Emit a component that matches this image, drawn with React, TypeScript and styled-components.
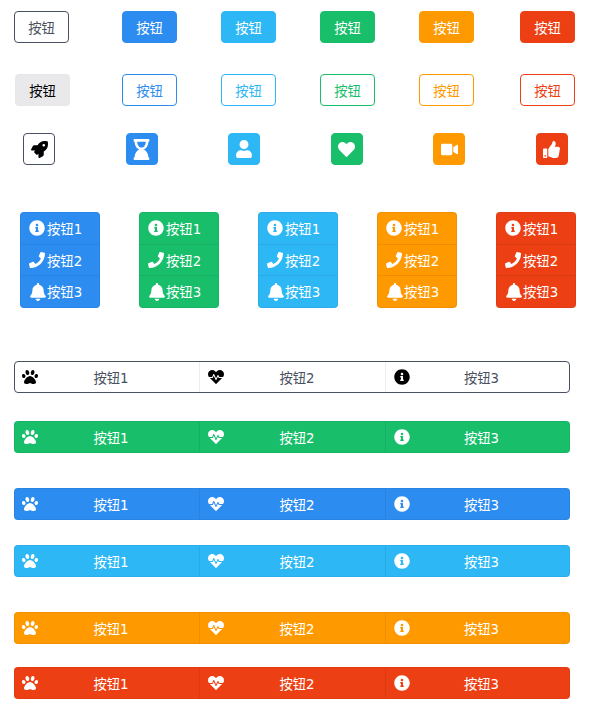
import React from "react";
import styled, { createGlobalStyle, css } from "styled-components";
import { IconType } from "react-icons";
import {
  FaBell,
  FaHeart,
  FaHeartbeat,
  FaHourglassEnd,
  FaInfoCircle,
  FaPaw,
  FaPhone,
  FaRocket,
  FaThumbsUp,
  FaUser,
  FaVideo,
} from "react-icons/fa";

const colors = {
  default: "#495060",
  primary: "#2d8cf0",
  info: "#2db7f5",
  success: "#19be6b",
  warning: "#ff9900",
  danger: "#ed3f14",
};

type Tone = keyof typeof colors;

const GlobalStyle = createGlobalStyle`
  html, body {
    margin: 0;
    padding: 0;
    background: #fff;
    font-family: "DejaVu Sans", "Noto Sans CJK SC", sans-serif;
    font-size: 13.33px;
  }
`;

const Page = styled.div`
  width: 594px;
  height: 713px;
  overflow: hidden;
  padding-top: 11px;
  box-sizing: border-box;
`;

const ButtonRow = styled.div<{ $top: number }>`
  display: grid;
  grid-template-columns: 108px 99px 99px 99px 101px 55px;
  padding-left: 14px;
  margin-top: ${(p) => p.$top}px;
`;

const Button = styled.button<{ $tone: Tone; $outline?: boolean }>`
  width: 55px;
  height: 32px;
  padding: 0;
  border-radius: 4px;
  border: 1px solid ${(p) => colors[p.$tone]};
  font: inherit;
  ${(p) =>
    p.$outline
      ? css`
          background: #fff;
          color: ${colors[p.$tone]};
        `
      : css`
          background: ${colors[p.$tone]};
          color: #fff;
        `}
`;

const DisabledButton = styled.button`
  width: 55px;
  height: 32px;
  margin-left: 1px;
  padding: 0;
  border-radius: 4px;
  border: 1px solid #e6e7ea;
  background: #e9e9ec;
  color: #000;
  font: inherit;
`;

const IconRow = styled.div`
  display: flex;
  justify-content: space-between;
  margin-top: 27px;
  padding: 0 26px 0 23px;
`;

const IconButton = styled.button<{ $tone: Tone; $outline?: boolean }>`
  width: 32px;
  height: 32px;
  padding: 0;
  display: flex;
  align-items: center;
  justify-content: center;
  border-radius: 4px;
  border: 1px solid ${(p) => colors[p.$tone]};
  background: ${(p) => (p.$outline ? "#fff" : colors[p.$tone])};
  color: ${(p) => (p.$outline ? "#000" : "#fff")};
`;

const GroupRow = styled.div`
  display: flex;
  justify-content: space-between;
  margin-top: 47px;
  padding: 0 18px 0 20px;
`;

const VerticalGroup = styled.div<{ $tone: Tone }>`
  width: 80px;
  height: 96px;
  box-sizing: border-box;
  display: flex;
  flex-direction: column;
  border-radius: 4px;
  border: 1px solid rgba(0, 0, 0, 0.05);
  background: ${(p) => colors[p.$tone]};
  color: #fff;
`;

const VerticalItem = styled.div`
  flex: 1;
  display: flex;
  align-items: center;
  padding-left: 8px;
  & + & {
    border-top: 1px solid rgba(0, 0, 0, 0.07);
  }
`;

const IconSlot = styled.span`
  width: 18px;
  flex: none;
  display: flex;
  align-items: center;
`;

const Bars = styled.div`
  display: flex;
  flex-direction: column;
  padding-left: 14px;
`;

const Bar = styled.div<{ $tone: Tone; $outline?: boolean; $top: number }>`
  width: 556px;
  height: 32px;
  margin-top: ${(p) => p.$top}px;
  box-sizing: border-box;
  display: grid;
  grid-template-columns: 185px 186px 1fr;
  border-radius: 4px;
  ${(p) =>
    p.$outline
      ? css`
          border: 1px solid ${colors.default};
          color: ${colors.default};
          svg {
            color: #000;
          }
        `
      : css`
          border: 1px solid rgba(0, 0, 0, 0.05);
          background: ${colors[p.$tone]};
          color: #fff;
        `}
`;

const BarItem = styled.div<{ $outline?: boolean }>`
  display: flex;
  align-items: center;
  padding-left: 7px;
  & + & {
    margin-left: -1px;
    padding-left: 8px;
    border-left: 1px solid
      ${(p) => (p.$outline ? colors.default : "rgba(0, 0, 0, 0.07)")};
  }
  svg {
    font-size: 16px;
    flex: none;
  }
`;

const BarLabel = styled.span`
  flex: 1;
  text-align: center;
  margin-right: 16px;
`;

const tones: Tone[] = ["primary", "info", "success", "warning", "danger"];
const groupTones: Tone[] = ["primary", "success", "info", "warning", "danger"];

const iconButtons: { tone: Tone; icon: IconType; size: number; outline?: boolean }[] = [
  { tone: "default", icon: FaRocket, size: 17, outline: true },
  { tone: "primary", icon: FaHourglassEnd, size: 21 },
  { tone: "info", icon: FaUser, size: 18 },
  { tone: "success", icon: FaHeart, size: 17 },
  { tone: "warning", icon: FaVideo, size: 17 },
  { tone: "danger", icon: FaThumbsUp, size: 17 },
];

const verticalItems: { label: string; icon: IconType; size: number }[] = [
  { label: "按钮1", icon: FaInfoCircle, size: 16 },
  { label: "按钮2", icon: FaPhone, size: 16 },
  { label: "按钮3", icon: FaBell, size: 18 },
];

const barItems: { label: string; icon: IconType }[] = [
  { label: "按钮1", icon: FaPaw },
  { label: "按钮2", icon: FaHeartbeat },
  { label: "按钮3", icon: FaInfoCircle },
];

const bars: { tone: Tone; top: number; outline?: boolean }[] = [
  { tone: "default", top: 53, outline: true },
  { tone: "success", top: 28 },
  { tone: "primary", top: 35 },
  { tone: "info", top: 25 },
  { tone: "warning", top: 35 },
  { tone: "danger", top: 23 },
];

export default function App() {
  return (
    <Page>
      <GlobalStyle />
      <ButtonRow $top={0}>
        <Button $tone="default" $outline>
          按钮
        </Button>
        {tones.map((tone) => (
          <Button key={tone} $tone={tone}>
            按钮
          </Button>
        ))}
      </ButtonRow>
      <ButtonRow $top={31}>
        <DisabledButton>按钮</DisabledButton>
        {tones.map((tone) => (
          <Button key={tone} $tone={tone} $outline>
            按钮
          </Button>
        ))}
      </ButtonRow>
      <IconRow>
        {iconButtons.map(({ tone, icon: Icon, size, outline }) => (
          <IconButton key={tone} $tone={tone} $outline={outline}>
            <Icon size={size} />
          </IconButton>
        ))}
      </IconRow>
      <GroupRow>
        {groupTones.map((tone) => (
          <VerticalGroup key={tone} $tone={tone}>
            {verticalItems.map(({ label, icon: Icon, size }) => (
              <VerticalItem key={label}>
                <IconSlot>
                  <Icon size={size} />
                </IconSlot>
                <span>{label}</span>
              </VerticalItem>
            ))}
          </VerticalGroup>
        ))}
      </GroupRow>
      <Bars>
        {bars.map(({ tone, top, outline }) => (
          <Bar key={tone} $tone={tone} $top={top} $outline={outline}>
            {barItems.map(({ label, icon: Icon }) => (
              <BarItem key={label} $outline={outline}>
                <Icon />
                <BarLabel>{label}</BarLabel>
              </BarItem>
            ))}
          </Bar>
        ))}
      </Bars>
    </Page>
  );
}
